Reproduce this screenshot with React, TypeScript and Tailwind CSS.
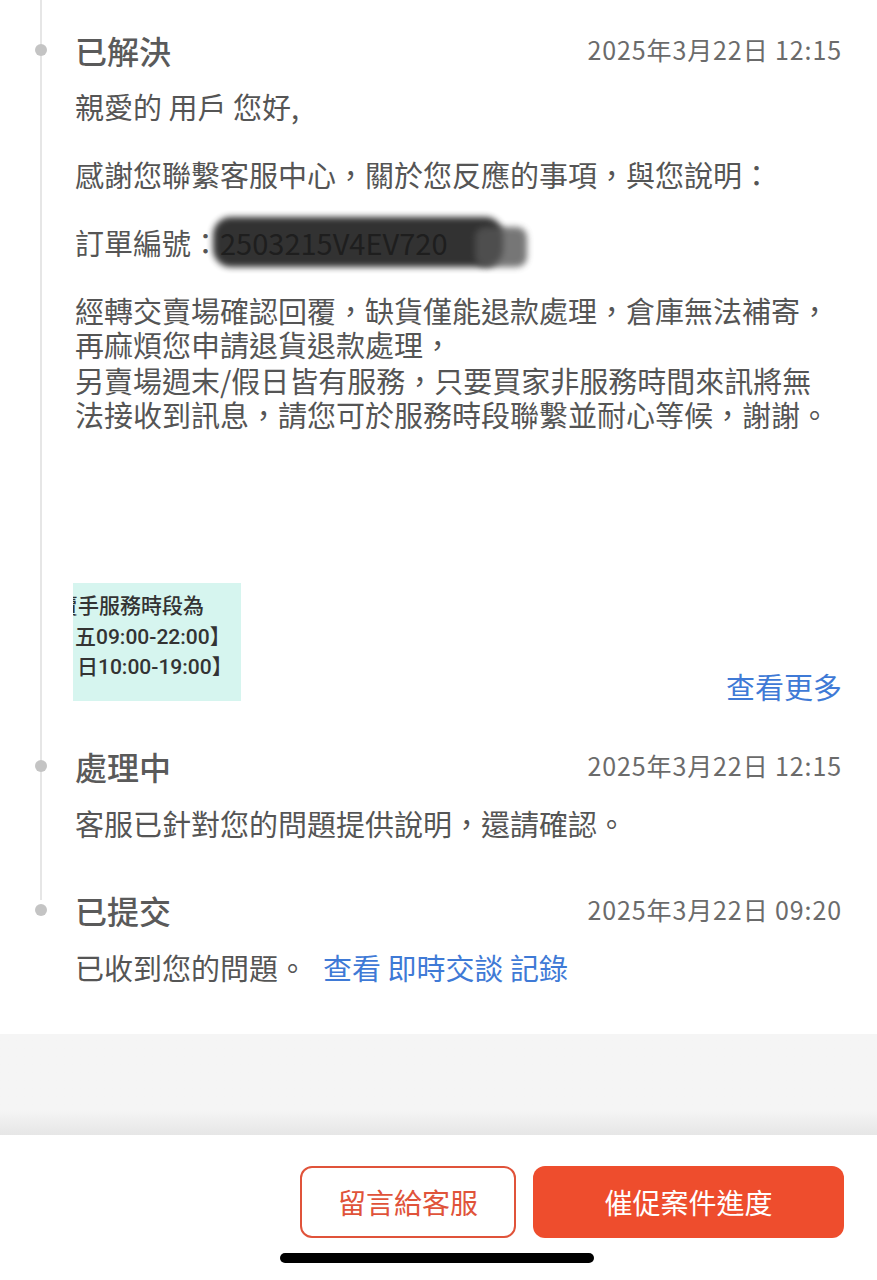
import React from 'react'

const font = { fontFamily: '"Noto Sans CJK TC", "Noto Sans", sans-serif' }

function Item({
  title,
  date,
  line,
  first,
  children,
  pb,
}: {
  title: string
  date: string
  line: boolean
  first?: boolean
  children: React.ReactNode
  pb: string
}) {
  return (
    <div className={`flex ${first ? 'pt-[30px]' : ''} ${pb}`}>
      <div className="relative w-[75px] shrink-0">
        {line && (
          <div
            className={`absolute left-[40px] ${first ? '-top-[30px]' : 'top-0'} -bottom-[60px] w-[2px] bg-[#e6e6e6]`}
          />
        )}
        <div className="absolute left-[35px] top-[14px] h-[12px] w-[12px] rounded-full bg-[#c4c4c4]" />
      </div>
      <div className="min-w-0 flex-1 pr-[35px]">
        <div className="flex h-[40px] items-center justify-between">
          <span className="text-[32px] font-medium text-[#5a5a5a]">{title}</span>
          <span className="text-[25px] tracking-[0.9px] text-[#6b6b6b]">{date}</span>
        </div>
        <div className="mt-[20px] text-[29px] leading-[34px] text-[#555555]">{children}</div>
      </div>
    </div>
  )
}

export default function App() {
  return (
    <div className="flex h-[1280px] w-[877px] flex-col overflow-hidden bg-white" style={font}>
      <div className="bg-white pb-[50px]">
        <Item title="已解決" date="2025年3月22日 12:15" line first pb="pb-[45px]">
          <div className="-mt-[1px]">親愛的 用戶 您好,</div>
          <div className="h-[34px]" />
          <div>感謝您聯繫客服中心，關於您反應的事項，與您說明：</div>
          <div className="h-[34px]" />
          <div className="relative">
            訂單編號：<span className="text-[#333]">2503215V4EV720</span>
            <span className="absolute left-[138px] top-[-8px] h-[50px] w-[290px] rounded-[18px] bg-[#1c1c1c] opacity-[0.9] blur-[3px]" />
            <span className="absolute left-[400px] top-[2px] h-[40px] w-[52px] rounded-[10px] bg-[#555] opacity-80 blur-[3px]" />
          </div>
          <div className="h-[34px]" />
          <div>經轉交賣場確認回覆，缺貨僅能退款處理，倉庫無法補寄，</div>
          <div>再麻煩您申請退貨退款處理，</div>
          <div className="mt-[2px]">另賣場週末/假日皆有服務，只要買家非服務時間來訊將無</div>
          <div>法接收到訊息，請您可於服務時段聯繫並耐心等候，謝謝。</div>
          <div className="mt-[152px] flex items-end justify-between">
            <div
              className="-ml-[2px] flex h-[118px] w-[168px] flex-col overflow-hidden bg-[#d6f5ef] pl-[2px] pt-[7px] text-[21px] font-medium leading-[32px] text-[#333]"
              style={{ fontFamily: 'Roboto, "Noto Sans CJK TC", sans-serif' }}
            >
              <div className="-ml-[18px] whitespace-nowrap">賣手服務時段為</div>
              <div className="-mt-[1px] whitespace-nowrap">五09:00-22:00】</div>
              <div className="-mt-[2px] whitespace-nowrap pl-[2px]">日10:00-19:00】</div>
            </div>
            <span className="-mb-[2px] text-[#3f7ad6]">查看更多</span>
          </div>
        </Item>
        <Item title="處理中" date="2025年3月22日 12:15" line pb="pb-[50px]">
          <div className="mt-[1px]">客服已針對您的問題提供說明，還請確認。</div>
        </Item>
        <Item title="已提交" date="2025年3月22日 09:20" line={false} pb="">
          <div className="mt-[1px]">
            已收到您的問題。<span className="ml-[16px] text-[#3f7ad6]">查看 即時交談 記錄</span>
          </div>
        </Item>
      </div>
      <div className="h-[101px] bg-gradient-to-b from-[#f5f5f5] from-75% to-[#e6e6e6]" />
      <div className="flex flex-1 flex-col bg-white">
        <div className="flex justify-end gap-[17px] pr-[33px] pt-[31px]">
          <button className="flex h-[72px] w-[216px] items-center justify-center rounded-[12px] border-2 border-[#e0533a] text-[28px] text-[#e0533a]">
            留言給客服
          </button>
          <button className="flex h-[72px] w-[311px] items-center justify-center rounded-[12px] bg-[#ee4d2d] text-[28px] text-white">
            催促案件進度
          </button>
        </div>
        <div className="mt-[15px] flex justify-center pr-[4px]">
          <div className="h-[10px] w-[314px] rounded-full bg-black" />
        </div>
      </div>
    </div>
  )
}
